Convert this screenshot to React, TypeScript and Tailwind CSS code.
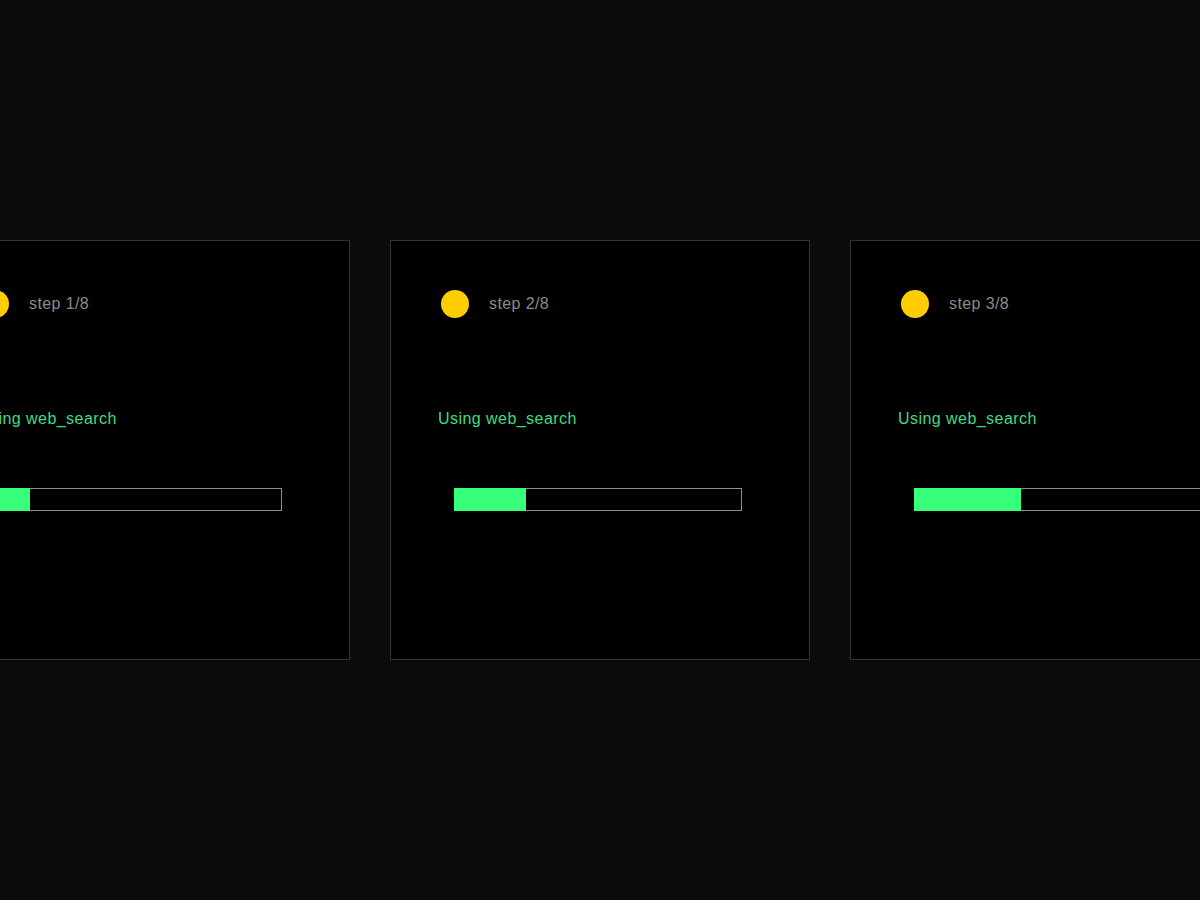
import React from "react";

const steps = [1, 2, 3];
const total = 8;

function StepCard({ step }: { step: number }) {
  const pct = (step / total) * 100;
  return (
    <div className="flex h-[420px] w-[420px] shrink-0 flex-col border border-[#333333] bg-black">
      <div className="ml-[50px] mt-[49px] flex h-[28px] items-center gap-5">
        <div className="h-[28px] w-[28px] rounded-full bg-[#ffcc00]" />
        <span className="text-[16px] leading-6 tracking-[0.4px] text-[#8a8a8a]">step {step}/{total}</span>
      </div>
      <div className="ml-[47px] mt-[89px] text-[16px] leading-6 tracking-[0.45px] text-[#3fdc80]">Using web_search</div>
      <div className="relative ml-[63px] mt-[57px] h-[23px] w-[288px] border border-[#8f8f8f]">
        <div className="absolute -left-px -top-px h-[23px] bg-[#36ff7a]" style={{ width: `${pct}%` }} />
      </div>
    </div>
  );
}

export default function App() {
  return (
    <div
      className="flex h-[900px] w-full items-center justify-center gap-10 overflow-hidden bg-[#0b0b0b]"
      style={{ fontFamily: '"Liberation Sans", Arial, sans-serif' }}
    >
      {steps.map((s) => (
        <StepCard key={s} step={s} />
      ))}
    </div>
  );
}
